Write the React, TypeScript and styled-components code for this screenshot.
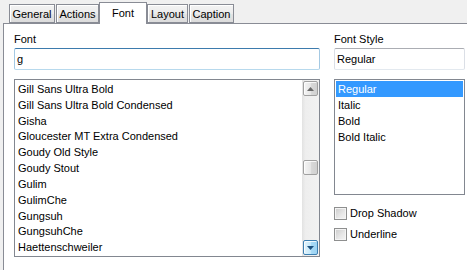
import React from 'react';
import styled, { createGlobalStyle } from 'styled-components';

const GlobalStyle = createGlobalStyle`
	html, body {
		margin: 0;
		padding: 0;
		background: #f0f0f0;
	}
	body {
		font-family: 'Liberation Sans', Arial, sans-serif;
		font-size: 11px;
		color: #000;
	}
`;

const Window = styled.div`
	width: 467px;
	height: 270px;
	display: flex;
	flex-direction: column;
	overflow: hidden;
	background: #f0f0f0;
`;

// Tab strip
const TabStrip = styled.div`
	height: 23px;
	display: flex;
	align-items: flex-end;
	gap: 1px;
	padding-left: 9px;
	position: relative;
	z-index: 2;
`;

const Tab = styled.div<{ $active?: boolean; $w: number }>`
	box-sizing: border-box;
	width: ${(p) => p.$w}px;
	height: ${(p) => (p.$active ? 22 : 19)}px;
	margin: ${(p) => (p.$active ? '0 -1px -1px -1px' : '0')};
	border: 1px solid #898c95;
	border-bottom: ${(p) => (p.$active ? 'none' : '1px solid #898c95')};
	background: ${(p) =>
		p.$active
			? '#ffffff'
			: 'linear-gradient(to bottom, #f3f3f3 0%, #ececec 50%, #e4e4e4 51%, #dcdcdc 100%)'};
	box-shadow: ${(p) => (p.$active ? 'none' : 'inset 1px 1px 0 #ffffff')};
	display: flex;
	justify-content: center;
	padding-top: ${(p) => (p.$active ? 4 : 3)}px;
	line-height: 13px;
	font-size: 11px;
`;

// Panel
const Panel = styled.div`
	flex: 1;
	margin-left: 3px;
	background: #ffffff;
	border-left: 1px solid #898c95;
	border-top: 1px solid #898c95;
	padding: 7px 0 0 10px;
	display: flex;
	gap: 14px;
`;

const Column = styled.div<{ $w: number }>`
	width: ${(p) => p.$w}px;
	display: flex;
	flex-direction: column;
`;

const Label = styled.div`
	height: 17px;
	line-height: 13px;
	padding-top: 2px;
	box-sizing: border-box;
`;

const TextBox = styled.div<{ $focused?: boolean }>`
	box-sizing: border-box;
	height: 22px;
	border: 1px solid;
	border-color: ${(p) =>
		p.$focused ? '#3d7bad #a4c9e3 #b7d9ed #a4c9e3' : '#abadb3 #dbdfe6 #e3e9ef #dbdfe6'};
	border-radius: 2px;
	padding: 4px 2px 0 2px;
	line-height: 13px;
	background: #fff;
`;

const ListBox = styled.div<{ $h: number }>`
	box-sizing: border-box;
	margin-top: 9px;
	height: ${(p) => p.$h}px;
	border: 1px solid #828790;
	background: #fff;
	display: flex;
	overflow: hidden;
`;

const Items = styled.div`
	flex: 1;
	padding: 1px;
	display: flex;
	flex-direction: column;
`;

const Item = styled.div<{ $selected?: boolean }>`
	height: 16px;
	line-height: 16px;
	padding-left: 2px;
	white-space: nowrap;
	overflow: hidden;
	background: ${(p) => (p.$selected ? '#3399ff' : 'transparent')};
	color: ${(p) => (p.$selected ? '#ffffff' : '#000000')};
`;

// Scrollbar
const ScrollBar = styled.div`
	width: 17px;
	display: flex;
	flex-direction: column;
	background: linear-gradient(to right, #e2e2e2 0%, #eeeeee 20%, #f2f2f2 100%);
	padding: 1px 0;
	box-sizing: border-box;
`;

const ScrollButton = styled.div<{ $hot?: boolean }>`
	box-sizing: border-box;
	width: 15px;
	height: 15px;
	margin: 0 1px 0 1px;
	border: 1px solid ${(p) => (p.$hot ? '#3c7fb1' : '#a0a0a0')};
	border-radius: 2px;
	background: ${(p) =>
		p.$hot
			? 'linear-gradient(to right, #e3f4fc 0%, #c4e8fa 50%, #a9dbf6 51%, #9cd3f3 100%)'
			: 'linear-gradient(to right, #f5f5f5 0%, #e6e6e6 50%, #d9d9d9 51%, #d0d0d0 100%)'};
	box-shadow: inset 1px 1px 0 rgba(255, 255, 255, 0.8);
	display: flex;
	align-items: center;
	justify-content: center;
`;

const Track = styled.div`
	flex: 1;
	display: flex;
	flex-direction: column;
`;

const Thumb = styled(ScrollButton)<{ $top: number }>`
	margin-top: ${(p) => p.$top}px;
`;

// Checkboxes
const CheckRow = styled.label<{ $mt: number }>`
	display: flex;
	align-items: center;
	gap: 3px;
	height: 13px;
	line-height: 13px;
	margin-top: ${(p) => p.$mt}px;
`;

const CheckBox = styled.span`
	box-sizing: border-box;
	width: 13px;
	height: 13px;
	border: 1px solid #8e8f8f;
	background: linear-gradient(135deg, #cbcbcb 0%, #e8e8e8 60%, #f4f4f4 100%);
	box-shadow: inset 0 0 0 1px #f4f4f4;
`;

const ArrowUp = ({ color }: { color: string }) => (
	<svg width="7" height="4" viewBox="0 0 7 4">
		<polygon points="3.5,0 7,4 0,4" fill={color} />
	</svg>
);

const ArrowDown = ({ color }: { color: string }) => (
	<svg width="7" height="4" viewBox="0 0 7 4">
		<polygon points="0,0 7,0 3.5,4" fill={color} />
	</svg>
);

const fonts = [
	'Gill Sans Ultra Bold',
	'Gill Sans Ultra Bold Condensed',
	'Gisha',
	'Gloucester MT Extra Condensed',
	'Goudy Old Style',
	'Goudy Stout',
	'Gulim',
	'GulimChe',
	'Gungsuh',
	'GungsuhChe',
	'Haettenschweiler',
];

const styles = ['Regular', 'Italic', 'Bold', 'Bold Italic'];

const tabs = [
	{ name: 'General', w: 46 },
	{ name: 'Actions', w: 43 },
	{ name: 'Font', w: 48, active: true },
	{ name: 'Layout', w: 41 },
	{ name: 'Caption', w: 45 },
];

export default function App() {
	return (
		<Window>
			<GlobalStyle />
			<TabStrip>
				{tabs.map((t) => (
					<Tab key={t.name} $w={t.w} $active={t.active}>
						{t.name}
					</Tab>
				))}
			</TabStrip>
			<Panel>
				<Column $w={306}>
					<Label>Font</Label>
					<TextBox $focused>g</TextBox>
					<ListBox $h={178}>
						<Items>
							{fonts.map((f) => (
								<Item key={f}>{f}</Item>
							))}
						</Items>
						<ScrollBar>
							<ScrollButton>
								<ArrowUp color="#6a6a6a" />
							</ScrollButton>
							<Track>
								<Thumb $top={64} />
							</Track>
							<ScrollButton $hot>
								<ArrowDown color="#1c5180" />
							</ScrollButton>
						</ScrollBar>
					</ListBox>
				</Column>
				<Column $w={131}>
					<Label>Font Style</Label>
					<TextBox>Regular</TextBox>
					<ListBox $h={116}>
						<Items>
							{styles.map((s, i) => (
								<Item key={s} $selected={i === 0}>
									{s}
								</Item>
							))}
						</Items>
					</ListBox>
					<CheckRow $mt={12}>
						<CheckBox />
						Drop Shadow
					</CheckRow>
					<CheckRow $mt={8}>
						<CheckBox />
						Underline
					</CheckRow>
				</Column>
			</Panel>
		</Window>
	);
}
